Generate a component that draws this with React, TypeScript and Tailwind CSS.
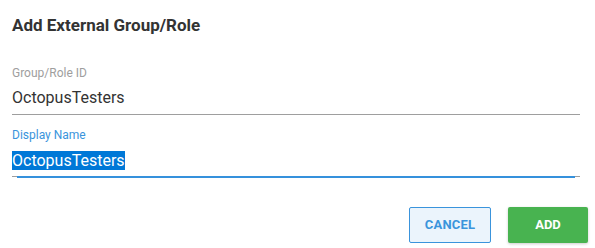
import React from "react";

export default function App() {
  return (
    <div className="w-[595px] h-[248px] bg-white font-['Roboto',sans-serif] overflow-hidden">
      <div className="pl-[12px] pr-[15px] pt-[13px]">
        <div className="text-[17px] leading-[24px] font-bold text-[#333333]">Add External Group/Role</div>
        <div className="mt-[28px]">
          <div className="text-[12px] leading-[16px] text-[#9e9e9e]">Group/Role ID</div>
          <div className="mt-[5px] text-[16px] leading-[24px] text-[#333333] pb-[4px] border-b border-[#9e9e9e]">OctopusTesters</div>
        </div>
        <div className="mt-[12px]">
          <div className="text-[12px] leading-[16px] text-[#3a94dc]">Display Name</div>
          <div className="relative mt-[6px] text-[16px] leading-[24px] text-[#333333] pb-[3px] border-b border-[#9e9e9e]">
            <span className="bg-[#0078d7] text-white">OctopusTesters</span>
            <div className="absolute left-[5px] right-[5px] bottom-[-2px] h-[2px] bg-[#3591dc]" />
          </div>
        </div>
      </div>
      <div className="flex justify-end gap-[17px] pr-[7px] mt-[30px]">
        <button className="w-[82px] h-[36px] rounded-[2px] border border-[#3a94dc] bg-[#ebf4fc] text-[#3a94dc] text-[13px] font-bold tracking-[0.2px]">CANCEL</button>
        <button className="w-[80px] h-[36px] rounded-[2px] bg-[#48b350] text-white text-[13px] font-bold shadow-[0_1px_3px_rgba(0,0,0,0.2)]">ADD</button>
      </div>
    </div>
  );
}
